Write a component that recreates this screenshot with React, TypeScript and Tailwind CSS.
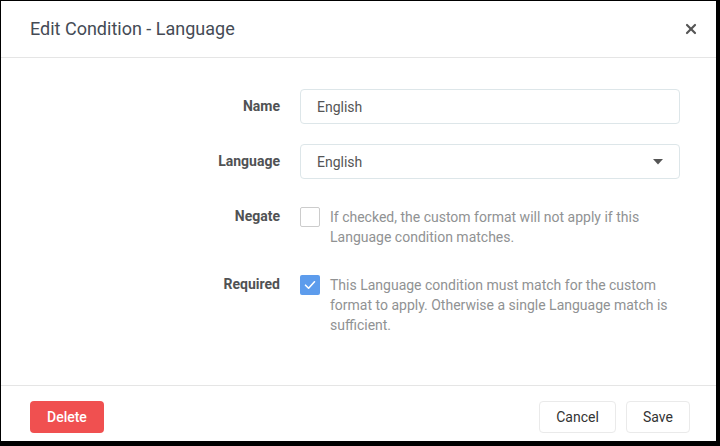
import { X } from "lucide-react";

const font = { fontFamily: "Roboto, 'Liberation Sans', sans-serif" };

function FormRow({ label, children }: { label: string; children: React.ReactNode }) {
  return (
    <div className="mb-5 flex items-start">
      <label className="mr-5 h-[35px] w-[249px] shrink-0 text-right text-sm font-bold leading-[35px] text-[#505254]">
        {label}
      </label>
      {children}
    </div>
  );
}

function CheckRow({
  label,
  checked,
  help,
}: {
  label: string;
  checked: boolean;
  help: React.ReactNode;
}) {
  return (
    <FormRow label={label}>
      <div className="flex items-start pt-2">
        {checked ? (
          <span className="flex h-5 w-5 shrink-0 items-center justify-center rounded-[2px] bg-[#5d9cec]">
            <svg width="12" height="10" viewBox="0 0 12 10" fill="none">
              <path d="M1.5 5.2 4.6 8.2 10.5 1.8" stroke="white" strokeWidth="1.6" strokeLinecap="round" strokeLinejoin="round" />
            </svg>
          </span>
        ) : (
          <span className="h-5 w-5 shrink-0 rounded-[2px] border border-[#cccccc] bg-white" />
        )}
        <p className="ml-[10px] w-[360px] text-sm leading-5 text-[#909293]">{help}</p>
      </div>
    </FormRow>
  );
}

export default function App() {
  return (
    <div className="h-[446px] w-[720px] overflow-hidden bg-black pl-px pt-px" style={font}>
      <div className="flex h-[440px] w-[715px] flex-col overflow-hidden bg-white">
        <header className="flex h-[57px] shrink-0 items-center justify-between border-b border-[#e5e5e5] pl-[29px] pr-[17px]">
          <h1 className="text-lg text-[#454b55]">Edit Condition - Language</h1>
          <button type="button" className="text-[#555]">
            <X size={16} strokeWidth={3.2} />
          </button>
        </header>

        <div className="shrink-0 px-[30px] pb-[30px] pt-[31px]">
          <FormRow label="Name">
            <div className="flex h-[35px] w-[380px] items-center rounded-[4px] border border-[#dde6e9] px-4 text-sm text-[#555]">
              English
            </div>
          </FormRow>
          <FormRow label="Language">
            <div className="flex h-[35px] w-[380px] items-center justify-between rounded-[4px] border border-[#dde6e9] pl-4 pr-[16px] text-sm text-[#555]">
              <span>English</span>
              <svg width="10" height="6" viewBox="0 0 10 6">
                <path d="M0 0h10L5 5.5z" fill="#555" />
              </svg>
            </div>
          </FormRow>
          <CheckRow
            label="Negate"
            checked={false}
            help="If checked, the custom format will not apply if this Language condition matches."
          />
          <CheckRow
            label="Required"
            checked
            help="This Language condition must match for the custom format to apply. Otherwise a single Language match is sufficient."
          />
        </div>

        <footer className="flex shrink-0 items-center justify-between border-t border-[#e5e5e5] pb-[15px] pl-[29px] pr-[26px] pt-[15px]">
          <button
            type="button"
            className="h-8 rounded-[4px] bg-[#f05050] px-[17px] text-sm font-medium text-white"
          >
            Delete
          </button>
          <div className="flex gap-[10px]">
            <button
              type="button"
              className="h-8 w-[77px] rounded-[4px] border border-[#eaeaea] bg-white text-sm text-[#333]"
            >
              Cancel
            </button>
            <button
              type="button"
              className="h-8 w-[64px] rounded-[4px] border border-[#eaeaea] bg-white text-sm text-[#333]"
            >
              Save
            </button>
          </div>
        </footer>
      </div>
    </div>
  );
}
